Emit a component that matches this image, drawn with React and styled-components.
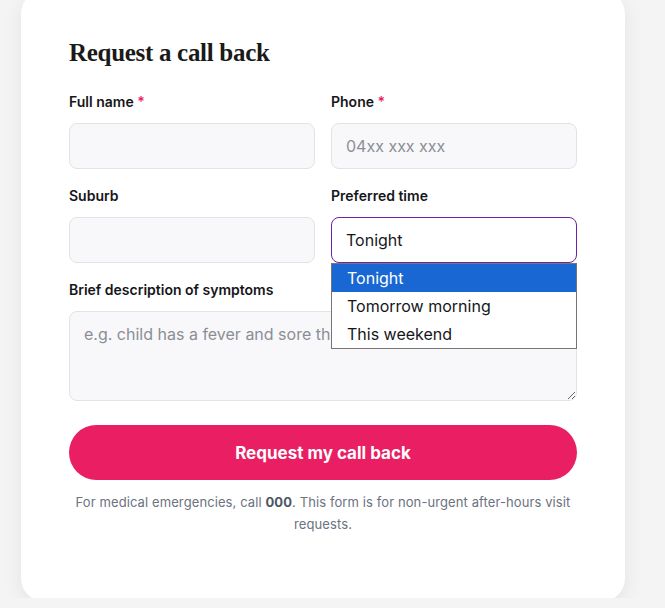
import React from 'react'
import styled, { createGlobalStyle } from 'styled-components'

const GlobalStyle = createGlobalStyle`
  html, body {
    margin: 0;
    padding: 0;
    background: #f4f4f5;
    font-family: Inter, "Noto Sans", sans-serif;
    color: #16161a;
    overflow: hidden;
  }
  * { box-sizing: border-box; }
`

const Page = styled.div`
  padding: 0 40px 0 21px;
  height: 608px;
`

const Card = styled.form`
  position: relative;
  width: 604px;
  margin-top: -10px;
  background: #fff;
  border-radius: 24px;
  padding: 48px 48px 67px;
  box-shadow: 0 6px 20px rgba(0, 0, 0, 0.07);
`

const Title = styled.h2`
  margin: 0 0 23px;
  font-family: "Liberation Serif", "DejaVu Serif", serif;
  font-weight: 700;
  font-size: 25px;
  line-height: 30px;
  letter-spacing: -0.3px;
  color: #1a1a1a;
`

const Grid = styled.div`
  display: grid;
  grid-template-columns: 1fr 1fr;
  column-gap: 16px;
  row-gap: 16px;
`

const Field = styled.div`
  position: relative;
  display: flex;
  flex-direction: column;
  gap: 10px;
  grid-column: ${p => (p.$wide ? '1 / -1' : 'auto')};
`

const Label = styled.label`
  font-size: 14px;
  line-height: 22px;
  font-weight: 600;
  color: #16161a;
`

const Req = styled.span`
  color: #e91e63;
`

const inputBase = `
  width: 100%;
  border: 1px solid #e3e3e6;
  border-radius: 8px;
  background: #f8f8fa;
  font-family: Inter, "Noto Sans", sans-serif;
  font-size: 16px;
  color: #16161a;
  padding: 0 14px;
  outline: none;
  &::placeholder { color: #8b8e96; }
`

const Input = styled.input`
  ${inputBase}
  height: 46px;
`

const Select = styled.div`
  ${inputBase}
  height: 46px;
  display: flex;
  align-items: center;
  background: #fff;
  border-color: #6b21a8;
`

const TextArea = styled.textarea`
  ${inputBase}
  height: 90px;
  padding: 10px 14px;
  line-height: 24px;
  resize: vertical;
`

const Options = styled.ul`
  position: absolute;
  left: 0;
  right: 0;
  top: 78px;
  margin: 0;
  padding: 0;
  list-style: none;
  background: #fff;
  border: 1px solid #767676;
  z-index: 5;
`

const Option = styled.li`
  height: 28px;
  line-height: 28px;
  padding-left: 15px;
  font-size: 16px;
  color: ${p => (p.$active ? '#fff' : '#16161a')};
  background: ${p => (p.$active ? '#1967d2' : '#fff')};
`

const Button = styled.button`
  display: block;
  width: 100%;
  height: 55px;
  margin-top: 24px;
  border: none;
  border-radius: 28px;
  background: #e91e63;
  color: #fff;
  font-family: Inter, "Noto Sans", sans-serif;
  font-size: 17px;
  font-weight: 700;
  cursor: pointer;
`

const Note = styled.p`
  margin: 11px 0 0;
  text-align: center;
  font-size: 13px;
  line-height: 22px;
  letter-spacing: 0.1px;
  color: #6b7280;

  strong { color: #4b5563; }
`

const times = ['Tonight', 'Tomorrow morning', 'This weekend']

const App = () => (
  <Page>
    <GlobalStyle />
    <Card onSubmit={e => e.preventDefault()}>
      <Title>Request a call back</Title>
      <Grid>
        <Field>
          <Label>Full name <Req>*</Req></Label>
          <Input type="text" />
        </Field>
        <Field>
          <Label>Phone <Req>*</Req></Label>
          <Input type="tel" placeholder="04xx xxx xxx" />
        </Field>
        <Field>
          <Label>Suburb</Label>
          <Input type="text" />
        </Field>
        <Field>
          <Label>Preferred time</Label>
          <Select>Tonight</Select>
          <Options>
            {times.map((t, i) => (
              <Option key={t} $active={i === 0}>{t}</Option>
            ))}
          </Options>
        </Field>
        <Field $wide>
          <Label>Brief description of symptoms</Label>
          <TextArea placeholder="e.g. child has a fever and sore throat since this afternoon" />
        </Field>
      </Grid>
      <Button type="submit">Request my call back</Button>
      <Note>
        For medical emergencies, call <strong>000</strong>. This form is for non-urgent after-hours visit requests.
      </Note>
    </Card>
  </Page>
)

export default App
